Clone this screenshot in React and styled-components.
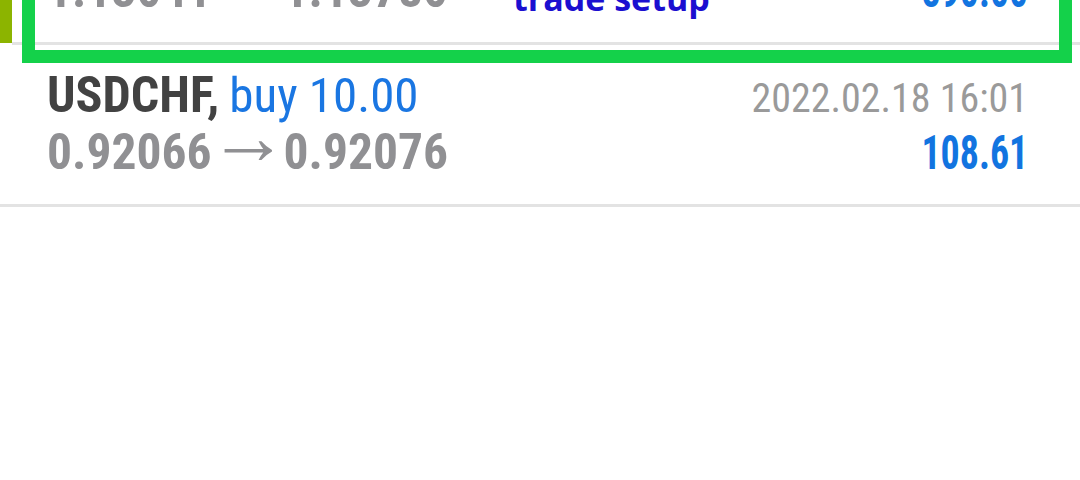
import React from 'react'
import styled, { createGlobalStyle } from 'styled-components'

const GlobalStyle = createGlobalStyle`
  html, body {
    margin: 0;
    padding: 0;
    background: #fff;
  }
  body {
    font-family: "Roboto Condensed", Roboto, "Liberation Sans", sans-serif;
    overflow: hidden;
  }
`

const Screen = styled.div`
  width: 1080px;
  height: 480px;
  overflow: hidden;
  background: #fff;
`

// the list is scrolled: the first deal is only half on screen
const List = styled.div`
  margin-top: -117px;
  display: flex;
  flex-direction: column;
`

const Row = styled.div`
  position: relative;
  display: flex;
  height: 162px;
`

const Marker = styled.div`
  flex-shrink: 0;
  width: 12px;
  margin-bottom: 2px;
  background: ${p => p.color};
`

const Body = styled.div`
  flex: 1;
  box-sizing: border-box;
  padding: 22px 52px 0 ${p => p.indent}px;
  border-bottom: 3px solid #e3e3e3;
  display: flex;
  flex-direction: column;
`

const Line = styled.div`
  display: flex;
  justify-content: space-between;
  align-items: baseline;
  height: 57px;
  line-height: 57px;
  white-space: nowrap;
`

const Symbol = styled.span`
  font-size: 50px;
  font-weight: 700;
  color: #424242;
  margin-right: 10px;
`

const Side = styled.span`
  font-size: 49px;
  font-weight: 400;
  color: #1a76e2;
`

const Price = styled.span`
  font-size: 49.5px;
  font-weight: 700;
  color: #909093;
`

const Arrow = styled.span`
  font-size: 80px;
  font-weight: 300;
  line-height: 0;
  color: #909093;
  margin: 0 -5px 0 -3px;
  vertical-align: 5px;
`

const Time = styled.span`
  font-size: 40px;
  color: #9a9a9a;
`

// the profit figure is set in a narrow cut
const Profit = styled.span`
  display: inline-block;
  font-size: 48px;
  font-weight: 700;
  color: ${p => (p.loss ? '#c62828' : '#1274e0')};
  transform: scaleX(0.79);
  transform-origin: right center;
`

const Highlight = styled.div`
  position: absolute;
  left: 22px;
  right: 8px;
  top: 40px;
  bottom: -18px;
  border: 13px solid #14d14a;
  pointer-events: none;
`

const Note = styled.span`
  position: absolute;
  left: 478px;
  bottom: 35px;
  font-family: "Open Sans", "Liberation Sans", sans-serif;
  font-size: 34px;
  font-weight: 700;
  line-height: 1;
  color: #1b0fd0;
  white-space: nowrap;
`

const deals = [
  {
    symbol: 'EURUSD',
    side: 'buy 5.00',
    open: '1.13041',
    close: '1.13780',
    time: '2022.02.17 09:14',
    profit: '890.00',
    marker: '#8cb400',
    note: 'trade setup',
  },
  {
    symbol: 'USDCHF',
    side: 'buy 10.00',
    open: '0.92066',
    close: '0.92076',
    time: '2022.02.18 16:01',
    profit: '108.61',
  },
]

const Deal = ({ deal }) => (
  <Row>
    {deal.marker && <Marker color={deal.marker} />}
    <Body indent={deal.marker ? 35 : 47}>
      <Line>
        <span>
          <Symbol>{deal.symbol},</Symbol>
          <Side>{deal.side}</Side>
        </span>
        <Time>{deal.time}</Time>
      </Line>
      <Line>
        <span>
          <Price>{deal.open}</Price>
          <Arrow>→</Arrow>
          <Price>{deal.close}</Price>
        </span>
        <Profit>{deal.profit}</Profit>
      </Line>
    </Body>
    {deal.note && (
      <Highlight>
        <Note>{deal.note}</Note>
      </Highlight>
    )}
  </Row>
)

const App = () => {
  return (
    <Screen>
      <GlobalStyle />
      <List>
        {deals.map(d => (
          <Deal key={d.symbol + d.time} deal={d} />
        ))}
      </List>
    </Screen>
  )
}

export default App
